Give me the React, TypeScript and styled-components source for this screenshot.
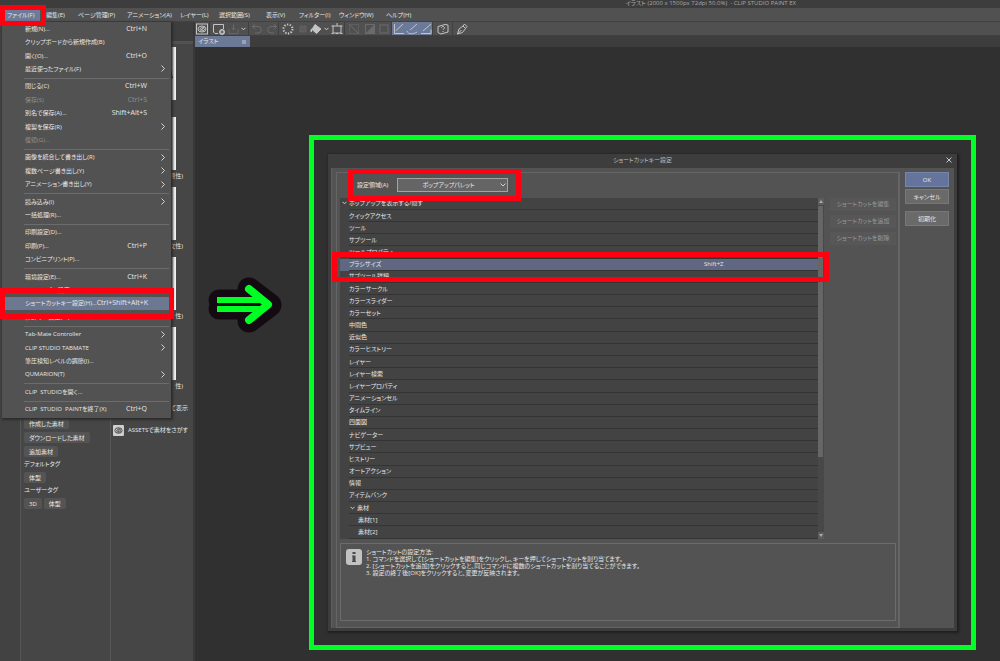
import React from 'react';
import styled, { createGlobalStyle } from 'styled-components';

const Global = createGlobalStyle`
  * { box-sizing: border-box; }
  body { margin: 0; background: #303030; }
  #root, button, select, input {
    font-family: "Open Sans", "Noto Sans CJK JP", sans-serif;
    font-feature-settings: "palt" 1;
    font-size: 6px;
    line-height: 12px;
    color: #e8e8e8;
  }
`;

const Page = styled.div`
  min-height: 100vh;
  display: flex;
  flex-direction: column;
  background: #303030;
  overflow: hidden;
`;

const TitleBar = styled.header`
  height: 8px;
  padding-right: 204px;
  background: #3d3d3d;
  color: #a8a8a8;
  display: flex;
  justify-content: flex-end;
  align-items: flex-start;
  white-space: pre;
  line-height: 6px;
`;

const MenuBar = styled.nav`
  position: relative;
  height: 14px;
  padding-left: 5px;
  display: flex;
  align-items: center;
  background: #515151;
  border-bottom: 1px solid #424242;
`;

const MenuTitle = styled.button<{ $w: number; $open?: boolean }>`
  width: ${(p) => p.$w}px;
  height: 12px;
  padding: 0 2px;
  border: 0;
  text-align: left;
  white-space: nowrap;
  line-height: 10px;
  background: ${(p) => (p.$open ? '#6d7a98' : 'transparent')};
`;

const MenuGap = styled.span`
  width: 4px;
`;

const Marker = styled.span<{ $top: number; $right: number; $bottom: number; $left: number }>`
  position: absolute;
  z-index: 5;
  top: ${(p) => p.$top}px;
  right: ${(p) => p.$right}px;
  bottom: ${(p) => p.$bottom}px;
  left: ${(p) => p.$left}px;
  border: 5px solid #ff0010;
  pointer-events: none;
`;

const MenuAnchor = styled.div`
  position: relative;
  display: flex;
`;

const DropDown = styled.div`
  position: absolute;
  z-index: 3;
  top: 22px;
  left: 2px;
  width: 169px;
  height: 396px;
  padding-bottom: 2px;
  display: flex;
  flex-direction: column;
  background: #525252;
  box-shadow: 1px 1px 2px 1px #2c2c2c;
`;

const Item = styled.button<{ $active?: boolean }>`
  position: relative;
  flex: 1 1 13px;
  margin: 0 2px 0 3px;
  padding: 0 4px 0 20px;
  border: 0;
  display: flex;
  align-items: center;
  text-align: left;
  white-space: pre;
  background: ${(p) => (p.$active ? '#6c7891' : 'transparent')};
  &:disabled { color: #909090; }
`;

const ItemLabel = styled.span`
  flex: 1;
`;

const Keys = styled.span`
  margin-right: 18px;
  font-size: 7px;
  text-align: right;
`;

const Rule = styled.hr`
  flex: 0 0 4px;
  width: 145px;
  margin: 0 2px 0 22px;
  border: 0;
  background: linear-gradient(#6c6c6c, #6c6c6c) 0 2px / 100% 1px no-repeat;
`;

const Body = styled.div`
  flex: 1;
  display: flex;
`;

const Side = styled.aside`
  flex: none;
  width: 195px;
  display: flex;
  background: #464646;
  border-right: 2px solid #393939;
`;

const Rail = styled.div`
  flex: none;
  width: 21px;
  background: #424242;
  border-right: 1px solid #565656;
`;

const Tags = styled.section`
  flex: none;
  width: 90px;
  padding: 396px 0 0 3px;
  display: flex;
  flex-direction: column;
  align-items: flex-start;
  gap: 3px;
  border-right: 1px solid #585858;
`;

const TagRow = styled.div`
  display: flex;
  gap: 2px;
`;

const Tag = styled.button`
  height: 11px;
  padding: 0 5px;
  border: 0;
  border-radius: 2px;
  background: #545454;
  white-space: nowrap;
  line-height: 10px;
`;

const TagHeading = styled.h2`
  margin: 0;
  height: 9px;
  font-size: 6px;
  font-weight: 400;
  line-height: 9px;
`;

const Materials = styled.section`
  flex: 1;
  min-width: 0;
  display: flex;
  flex-direction: column;
`;

const MaterialsHead = styled.div`
  height: 22px;
  margin-bottom: 3px;
  background: #3e3e3e;
  border-bottom: 3px solid #525252;
`;

const Card = styled.figure`
  height: 70px;
  margin: 0;
`;

const Thumb = styled.div`
  width: 60px;
  height: 53px;
  margin-left: 5px;
  display: flex;
  align-items: center;
  justify-content: flex-end;
  background: #f1f1f1;
`;

const Caption = styled.figcaption`
  height: 12px;
  padding-right: 10px;
  text-align: right;
`;

const LinkRow = styled.a`
  height: 22px;
  padding: 0 5px 0 2px;
  display: flex;
  align-items: center;
  justify-content: flex-end;
  gap: 4px;
  color: inherit;
  text-decoration: none;
  white-space: nowrap;
`;

const Main = styled.main`
  flex: 1;
  min-width: 0;
  display: flex;
  flex-direction: column;
`;

const ToolBar = styled.div`
  height: 14px;
  display: flex;
  align-items: center;
  background: #505050;
  border-bottom: 1px solid #404040;
`;

const Tool = styled.button<{ $w?: number; $on?: boolean; $dim?: boolean; $sep?: boolean }>`
  width: ${(p) => p.$w ?? 13}px;
  height: 13px;
  padding: 0;
  border: 0;
  border-right: ${(p) => (p.$sep ? '1px solid #3f3f3f' : '0')};
  display: flex;
  align-items: center;
  justify-content: center;
  background: ${(p) => (p.$on ? '#6c7a9a' : 'transparent')};
  color: ${(p) => (p.$dim ? '#6b6b6b' : '#c4c4c4')};
`;

const TabBar = styled.div`
  height: 11px;
  display: flex;
  background: #3d3d3d;
`;

const Tab = styled.button`
  width: 55px;
  padding: 0 4px 0 3px;
  border: 0;
  display: flex;
  align-items: center;
  justify-content: space-between;
  background: #6c7997;
  line-height: 11px;
`;

const TabClose = styled.span`
  width: 4px;
  height: 4px;
  background: #9aa3b8;
`;

const Canvas = styled.div`
  flex: 1;
  padding: 88px 24px 10px 12px;
  display: flex;
  align-items: flex-start;
  background: #303030;
`;

const Pointer = styled.svg`
  flex: none;
  width: 76px;
  height: 58px;
  margin: 141px 26px 0 0;
`;

const Frame = styled.section`
  flex: 1;
  min-width: 0;
  padding: 14px;
  border: 5px solid #00ff22;
`;

const Dialog = styled.div`
  display: flex;
  flex-direction: column;
  background: #535353;
  border: solid #3d3d3d;
  border-width: 0 3px 3px 3px;
  box-shadow: 1px 1px 2px 1px #202020;
`;

const DialogTitle = styled.h1`
  position: relative;
  height: 14px;
  margin: 0;
  background: #3d3d3d;
  color: #bcbcbc;
  font-size: 6px;
  font-weight: 400;
  line-height: 13px;
  text-align: center;
`;

const Close = styled.button`
  position: absolute;
  right: 1px;
  top: 2px;
  width: 8px;
  height: 8px;
  padding: 0;
  border: 0;
  background: none;
  display: flex;
`;

const DialogBody = styled.div`
  padding: 4px 5px 0 4px;
  display: flex;
  border-left: 1px solid #5e5e5e;
`;

const Group = styled.div`
  flex: 1;
  min-width: 0;
  height: 456px;
  padding: 5px 2px 6px 3px;
  display: flex;
  flex-direction: column;
  border: 1px solid #656565;
  border-right-width: 2px;
`;

const AreaRow = styled.div`
  position: relative;
  height: 20px;
  padding-left: 17px;
  display: flex;
  align-items: flex-start;
`;

const AreaLabel = styled.label`
  width: 40px;
  line-height: 14px;
  white-space: nowrap;
`;

const SelectWrap = styled.span`
  position: relative;
  display: flex;
  width: 111px;
  height: 14px;
`;

const Select = styled.select`
  width: 100%;
  height: 14px;
  padding: 0 12px 0 4px;
  appearance: none;
  border: 1px solid #a3a3a3;
  border-radius: 0;
  background: #656565;
  text-align: center;
  text-align-last: center;
  line-height: 12px;
`;

const SelectArrow = styled.svg`
  position: absolute;
  right: 2px;
  top: 5px;
  width: 6px;
  height: 4px;
`;

const ListRow = styled.div`
  flex: 1;
  display: flex;
  align-items: stretch;
`;

const ListBox = styled.div`
  flex: 1;
  background: #434343;
`;

const Table = styled.table`
  width: 100%;
  height: 341px;
  border-collapse: collapse;
  table-layout: fixed;
`;

const Row = styled.tr<{ $selected?: boolean }>`
  position: relative;
  background: ${(p) => (p.$selected ? '#5f6880' : 'transparent')};
`;

const Cell = styled.td<{ $indent?: number }>`
  padding: 0 0 0 ${(p) => p.$indent ?? 0}px;
  line-height: 11px;
  white-space: nowrap;
  background: linear-gradient(#343434, #343434) ${(p) => (p.$indent ? 9 : 0)}px 100% / 100% 1px no-repeat;
`;

const Twist = styled.svg`
  width: 5px;
  height: 4px;
  margin-right: 2px;
`;

const ScrollBar = styled.div`
  width: 6px;
  margin-right: 6px;
  display: flex;
  flex-direction: column;
  background: #484848;
`;

const ScrollArrow = styled.button`
  height: 7px;
  padding: 0;
  border: 0;
  background: #5c5c5c;
  display: flex;
  align-items: center;
  justify-content: center;
`;

const ScrollThumb = styled.div`
  height: 251px;
  margin: 1px 1px auto 0;
  background: #666;
`;

const EditButtons = styled.div`
  width: 66px;
  display: flex;
  flex-direction: column;
  gap: 4px;
`;

const EditButton = styled.button`
  height: 13px;
  padding: 0;
  border: 0;
  background: #575757;
  white-space: nowrap;
  &:disabled { color: #9a9a9a; }
`;

const Info = styled.div`
  height: 79px;
  margin-top: 4px;
  padding: 5px;
  display: flex;
  gap: 4px;
  border: 1px solid #6c6c6c;
`;

const InfoText = styled.div`
  line-height: 7px;
  white-space: nowrap;
`;

const InfoLine = styled.p`
  margin: 0;
`;

const Actions = styled.div`
  width: 49px;
  padding-left: 5px;
  display: flex;
  flex-direction: column;
  gap: 2px;
`;

const Action = styled.button<{ $primary?: boolean; $apart?: boolean }>`
  height: 15px;
  margin-top: ${(p) => (p.$apart ? 5 : 0)}px;
  padding: 0;
  border: 1px solid ${(p) => (p.$primary ? '#7686ab' : '#777')};
  background: ${(p) => (p.$primary ? '#64749d' : '#6a6a6a')};
`;

const MENUS: [string, number][] = [
  ['編集(E)', 32], ['ページ管理(P)', 49], ['アニメーション(A)', 53], ['レイヤー(L)', 39], ['選択範囲(S)', 47],
  ['表示(V)', 33], ['フィルター(I)', 40], ['ウィンドウ(W)', 47], ['ヘルプ(H)', 40],
];

type Entry = { t: string; k?: string; sub?: boolean; off?: boolean; on?: boolean } | null;

const ENTRIES: Entry[] = [
  { t: '新規(N)...', k: 'Ctrl+N' },
  { t: 'クリップボードから新規作成(B)' },
  { t: '開く(O)...', k: 'Ctrl+O' },
  { t: '最近使ったファイル(F)', sub: true },
  null,
  { t: '閉じる(C)', k: 'Ctrl+W' },
  { t: '保存(S)', k: 'Ctrl+S', off: true },
  { t: '別名で保存(A)...', k: 'Shift+Alt+S' },
  { t: '複製を保存(R)', sub: true },
  { t: '復帰(G)...', off: true },
  null,
  { t: '画像を統合して書き出し(R)', sub: true },
  { t: '複数ページ書き出し(Y)', sub: true },
  { t: 'アニメーション書き出し(Y)', sub: true },
  null,
  { t: '読み込み(I)', sub: true },
  { t: '一括処理(R)...' },
  null,
  { t: '印刷設定(D)...' },
  { t: '印刷(P)...', k: 'Ctrl+P' },
  { t: 'コンビニプリント(P)...' },
  null,
  { t: '環境設定(E)...', k: 'Ctrl+K' },
  { t: 'コマンドバー設定(J)...' },
  { t: 'ショートカットキー設定(H)...', k: 'Ctrl+Shift+Alt+K', on: true },
  { t: '修飾キー設定(M)...', k: 'Ctrl+Shift+Alt+Y' },
  null,
  { t: 'Tab-Mate Controller', sub: true },
  { t: 'CLIP STUDIO TABMATE', sub: true },
  { t: '筆圧検知レベルの調節(J)...' },
  { t: 'QUMARION(T)', sub: true },
  null,
  { t: 'CLIP  STUDIOを開く...' },
  null,
  { t: 'CLIP  STUDIO  PAINTを終了(X)', k: 'Ctrl+Q' },
];

const COMMANDS = [
  'クイックアクセス', 'ツール', 'サブツール', 'ツールプロパティ', 'ブラシサイズ', 'サブツール詳細', 'カラーサークル',
  'カラースライダー', 'カラーセット', '中間色', '近似色', 'カラーヒストリー', 'レイヤー', 'レイヤー検索',
  'レイヤープロパティ', 'アニメーションセル', 'タイムライン', '四面図', 'ナビゲーター', 'サブビュー', 'ヒストリー',
  'オートアクション', '情報', 'アイテムバンク',
];

const CAPTIONS = ['', '男性)', '女性)', '性)', '性)'];

const Ico = ({ children }: { children: React.ReactNode }) => (
  <svg width="12" height="12" viewBox="0 0 12 12" fill="none" stroke="currentColor" strokeWidth="1">
    {children}
  </svg>
);

const Swirl = () => (
  <>
    <ellipse cx="6" cy="6" rx="4" ry="3" />
    <path d="M8.5 4.5C6 3.5 4 5 4 6.3S6.5 8.5 8 7.2 7.3 4.8 6 5.6s-.2 1.7.8 1.1" />
  </>
);

const Chevron = () => (
  <svg width="4" height="7" viewBox="0 0 4 7" fill="none" stroke="#d4d4d4" strokeWidth="1">
    <path d="M.5.5l3 3-3 3" />
  </svg>
);

const Down = () => <path d="M.5.8l2 2 2-2" fill="none" stroke="#cfcfcf" />;

function Tools() {
  return (
    <ToolBar>
      <Tool $w={15} $sep aria-label="CLIP STUDIO"><Ico><rect x=".5" y="1" width="11" height="10" /><Swirl /></Ico></Tool>
      <Tool $w={18} aria-label="新規"><Ico><path d="M5 10.5H2L.5 9V1.500h10V6" /><circle cx="9" cy="9" r="2.500" fill="#c4c4c4" /><path d="M7.500 9h3M9 7.500v3" stroke="#505050" /></Ico></Tool>
      <Tool $w={11} $dim aria-label="保存"><Ico><path d="M1 6v5h10V6M6 1v6M4 5l2 2 2-2" /></Ico></Tool>
      <Tool $w={10} $sep aria-label="その他"><svg width="5" height="4"><Down /></svg></Tool>
      <Tool $w={16} $dim aria-label="取り消し"><Ico><path d="M4 1L1.500 3.500 4 6M1.500 3.500H7a3 3 0 010 6.500H4" /></Ico></Tool>
      <Tool $w={14} $dim $sep aria-label="やり直し"><Ico><path d="M8 1l2.500 2.500L8 6M10.500 3.500H5a3 3 0 000 6.500h3" /></Ico></Tool>
      <Tool $w={18} aria-label="消去"><Ico><circle cx="6" cy="6" r="4.500" strokeWidth="2" strokeDasharray="1.400 1.400" /></Ico></Tool>
      <Tool $w={12} $dim aria-label="選択範囲外を消去"><Ico><rect x="3" y="3" width="6" height="6" fill="#5b5b5b" strokeDasharray="1 1" /></Ico></Tool>
      <Tool $w={14} aria-label="塗りつぶし"><Ico><path d="M5 1.500l6 4.500-4.500 4.500L2 6.500z" fill="currentColor" /><path d="M2 6c-1 1-1 2-.5 3" strokeWidth="1.500" /></Ico></Tool>
      <Tool $w={7} aria-label="塗りの種類"><svg width="5" height="4"><Down /></svg></Tool>
      <Tool $w={15} $sep aria-label="拡大・縮小・回転"><Ico><rect x="2" y="3" width="8" height="7" /><path d="M6 0v3M.500 3h2M9.500 3h2M.500 10.500h2M9.500 10.500h2M5 10.500h2" /></Ico></Tool>
      <Tool $w={18} $dim aria-label="選択を解除"><Ico><rect x="1.500" y="1.500" width="9" height="9" strokeDasharray="1 1" /><path d="M1 1l10 10" /></Ico></Tool>
      <Tool $w={13} $dim aria-label="選択範囲を反転"><Ico><rect x="1.500" y="1.500" width="9" height="9" /><path d="M10.500 2v8.500H2z" fill="currentColor" /></Ico></Tool>
      <Tool $w={16} $dim $sep aria-label="選択範囲の境界線"><Ico><rect x="2" y="2" width="8" height="8" /></Ico></Tool>
      <Tool $w={13} $on aria-label="定規にスナップ"><Ico><path d="M1.500 1v9.500H11M3 7.500L10 1" /></Ico></Tool>
      <Tool $w={14} $on aria-label="特殊定規にスナップ"><Ico><path d="M1 8c1 4 7 3 10 1M4 7l7-6" /></Ico></Tool>
      <Tool $w={14} $on $sep aria-label="グリッドにスナップ"><Ico><path d="M1 10.500h10V6.500M3 8l8-7" /></Ico></Tool>
      <Tool $w={20} $sep aria-label="ヘルプ"><Ico><path d="M1 3.500L8 1.500l3 .5v7l-7 2-3-1.500zM4.500 5c0-2 3-2 3 0 0 1-1.500 1-1.500 2M6 8v1" /></Ico></Tool>
      <Tool $w={17} aria-label="ペン"><Ico><path d="M1.500 11l1.500-5 4-3 2.500 2.500-3 4zM7 3l1.500-2L11 3.500 9.500 5.500M1.500 11L5.500 7" /></Ico></Tool>
    </ToolBar>
  );
}

export default function App() {
  return (
    <Page>
      <Global />
      <TitleBar>イラスト (2000 x 1500px 72dpi 50.0%)  - CLIP STUDIO PAINT EX</TitleBar>
      <MenuBar>
        <MenuAnchor>
          <MenuTitle $w={35} $open>ファイル(F)</MenuTitle>
          <Marker $top={-4} $right={-6} $bottom={-5} $left={-5} />
        </MenuAnchor>
        <MenuGap />
        {MENUS.map(([t, w]) => <MenuTitle key={t} $w={w}>{t}</MenuTitle>)}
      </MenuBar>
      <DropDown role="menu">
        {ENTRIES.map((e, i) => e === null ? <Rule key={i} /> : (
          <Item key={i} role="menuitem" disabled={e.off} $active={e.on}>
            <ItemLabel>{e.t}</ItemLabel>
            {e.k && <Keys>{e.k}</Keys>}
            {e.sub && <Chevron />}
            {e.on && <Marker $top={-9} $right={-5} $bottom={-9} $left={-5} />}
          </Item>
        ))}
      </DropDown>
      <Body>
        <Side>
          <Rail />
          <Tags>
            <Tag>作成した素材</Tag>
            <Tag>ダウンロードした素材</Tag>
            <Tag>追加素材</Tag>
            <TagHeading>デフォルトタグ</TagHeading>
            <Tag>体型</Tag>
            <TagHeading>ユーザータグ</TagHeading>
            <TagRow><Tag>3D</Tag><Tag>体型</Tag></TagRow>
          </Tags>
          <Materials>
            <MaterialsHead />
            {/* each caption belongs to the row of the thumbnail above it */}
            {CAPTIONS.map((caption, i) => (
              <Card key={i}>
                <Thumb>
                  {i === 0 && <svg width="6" height="12"><path d="M0 2l2 1v3l1 4-3 1z" fill="#222" /></svg>}
                </Thumb>
                {i > 0 && <Caption>{caption}</Caption>}
              </Card>
            ))}
            <LinkRow href="#all">すべて表示</LinkRow>
            <LinkRow href="#assets">
              <svg width="11" height="11" viewBox="0 0 12 12" fill="none" stroke="#444">
                <rect width="12" height="12" rx="1" fill="#cfcfcf" stroke="none" />
                <Swirl />
              </svg>
              ASSETSで素材をさがす
            </LinkRow>
          </Materials>
        </Side>
        <Main>
          <Tools />
          <TabBar><Tab>イラスト<TabClose /></Tab></TabBar>
          <Canvas>
            <Pointer viewBox="0 0 76 58" fill="none" strokeLinejoin="round" strokeLinecap="round">
              <g stroke="#140b12">
                <path d="M12 24h42M12 33h42" strokeWidth="21" />
                <path d="M42 13l21 16-21 16" strokeWidth="23" />
                <path d="M20 29h36" strokeWidth="16" />
              </g>
              <g stroke="#00ff22">
                <path d="M10 24h46M10 33h46" strokeWidth="6" strokeLinecap="butt" />
                <path d="M42 13l19 15.500L42 44" strokeWidth="8" />
              </g>
            </Pointer>
            <Frame>
              <Dialog role="dialog" aria-labelledby="dialog-title">
                <DialogTitle id="dialog-title">
                  ショートカットキー設定
                  <Close aria-label="閉じる">
                    <svg width="8" height="8" stroke="#c8c8c8"><path d="M1.500 1.500l5 5M6.500 1.500l-5 5" /></svg>
                  </Close>
                </DialogTitle>
                <DialogBody>
                  <Group>
                    <AreaRow>
                      <AreaLabel htmlFor="area">設定領域(A)</AreaLabel>
                      <SelectWrap>
                        <Select id="area"><option>ポップアップパレット</option></Select>
                        <SelectArrow><path d="M.5.5l2.500 2.500L5.500.5" fill="none" stroke="#d0d0d0" /></SelectArrow>
                        <Marker $top={-9} $right={-13} $bottom={-9} $left={-49} />
                      </SelectWrap>
                    </AreaRow>
                    <ListRow>
                      <ListBox>
                        <Table>
                          <colgroup><col /><col width="114" /></colgroup>
                          <tbody>
                            <Row>
                              <Cell $indent={2}><Twist><Down /></Twist>ポップアップを表示する/隠す</Cell><Cell />
                            </Row>
                            {COMMANDS.map((c) => {
                              const on = c === 'ブラシサイズ';
                              return (
                                <Row key={c} $selected={on}>
                                  <Cell $indent={9}>{c}</Cell>
                                  <Cell>
                                    {on && 'Shift+Z'}
                                    {on && <Marker $top={-7} $right={-11} $bottom={-11} $left={-8} />}
                                  </Cell>
                                </Row>
                              );
                            })}
                            <Row><Cell $indent={10}><Twist><Down /></Twist>素材</Cell><Cell /></Row>
                            <Row><Cell $indent={18}>素材[1]</Cell><Cell /></Row>
                            <Row><Cell $indent={18}>素材[2]</Cell><Cell /></Row>
                          </tbody>
                        </Table>
                      </ListBox>
                      <ScrollBar>
                        <ScrollArrow aria-label="上へ"><svg width="4" height="3"><path d="M0 3l2-3 2 3z" fill="#aaa" /></svg></ScrollArrow>
                        <ScrollThumb />
                        <ScrollArrow aria-label="下へ"><svg width="4" height="3"><path d="M0 0l2 3 2-3z" fill="#aaa" /></svg></ScrollArrow>
                      </ScrollBar>
                      <EditButtons>
                        <EditButton disabled>ショートカットを編集</EditButton>
                        <EditButton disabled>ショートカットを追加</EditButton>
                        <EditButton disabled>ショートカットを削除</EditButton>
                      </EditButtons>
                    </ListRow>
                    <Info>
                      <svg width="16" height="16" viewBox="0 0 16 16">
                        <rect width="16" height="16" rx="3" fill="#c2c2c2" />
                        <path d="M6.500 3h3v2h-3zM6 6.500h3.500V12H10v1H6v-1h.500V7.500H6z" fill="#4a4a4a" />
                      </svg>
                      <InfoText>
                        <InfoLine>ショートカットの設定方法:</InfoLine>
                        <InfoLine>1. コマンドを選択して[ショートカットを編集]をクリックし、キーを押してショートカットを割り当てます。</InfoLine>
                        <InfoLine>2. [ショートカットを追加]をクリックすると、同じコマンドに複数のショートカットを割り当てることができます。</InfoLine>
                        <InfoLine>3. 設定の終了後[OK]をクリックすると、変更が反映されます。</InfoLine>
                      </InfoText>
                    </Info>
                  </Group>
                  <Actions>
                    <Action $primary>OK</Action>
                    <Action>キャンセル</Action>
                    <Action $apart>初期化</Action>
                  </Actions>
                </DialogBody>
              </Dialog>
            </Frame>
          </Canvas>
        </Main>
      </Body>
    </Page>
  );
}
